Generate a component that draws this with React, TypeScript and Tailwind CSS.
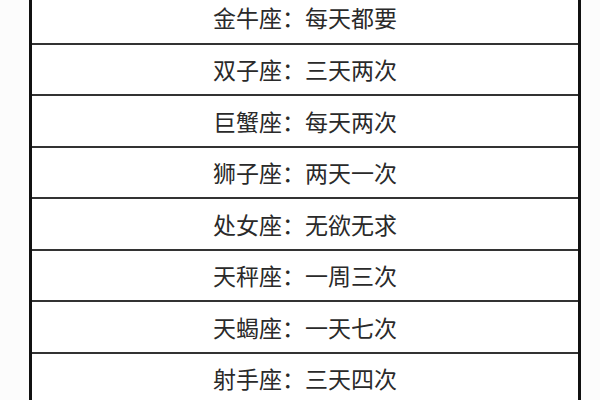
const rows = [
  "金牛座：每天都要",
  "双子座：三天两次",
  "巨蟹座：每天两次",
  "狮子座：两天一次",
  "处女座：无欲无求",
  "天秤座：一周三次",
  "天蝎座：一天七次",
  "射手座：三天四次",
];

export default function App() {
  return (
    <div className="w-[600px] h-[400px] overflow-hidden bg-[#fcfcfc]">
      <div className="ml-[29px] -mt-[9px] w-[552px] border-x-[3px] border-[#111] bg-white">
        {rows.map((text, i) => (
          <div
            key={i}
            className={
              "h-[51.5px] flex items-center justify-center text-[23px] text-[#2a2a2a] " +
              (i === 0 ? "" : "border-t-2 border-[#333]")
            }
            style={{ fontFamily: '"Noto Sans CJK SC", "Noto Sans", sans-serif' }}
          >
            {text}
          </div>
        ))}
      </div>
    </div>
  );
}
